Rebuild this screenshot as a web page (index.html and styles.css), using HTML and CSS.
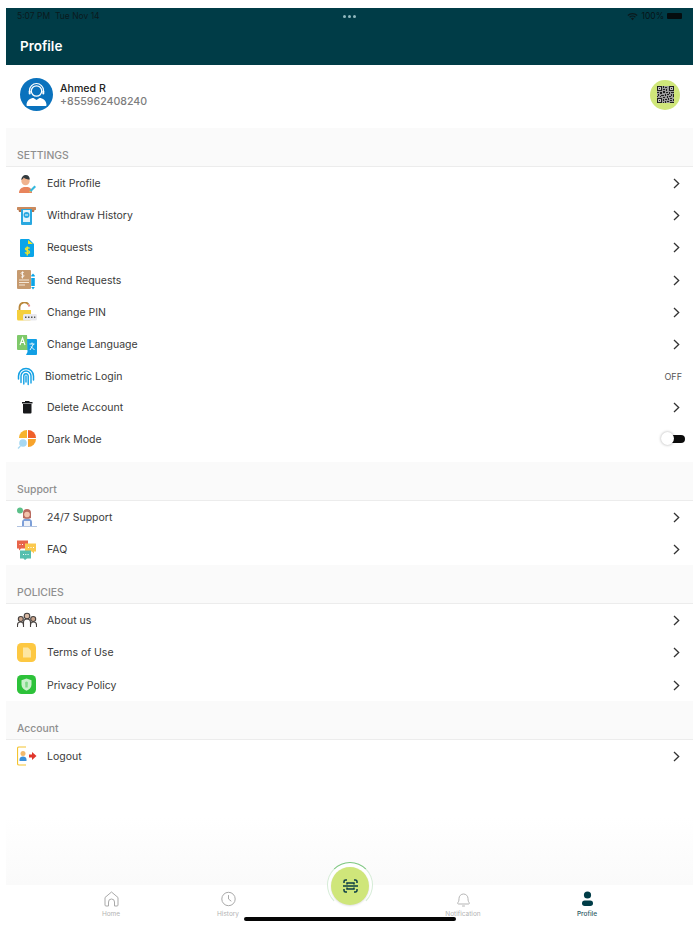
FILE: index.html
```html
<!DOCTYPE html>
<html lang="en">
<head>
    <meta charset="UTF-8">
    <meta name="viewport" content="width=device-width, initial-scale=1.0">
    <title>Profile</title>
    <link rel="stylesheet" href="styles.css">
</head>
<body>

<div class="app">
    <!-- Header with the tablet status bar inside -->
    <div class="header">
        <div class="status-bar">
            <span class="status-time">5:07 PM&nbsp;&nbsp;Tue Nov 14</span>
            <span class="status-dots"><i></i><i></i><i></i></span>
            <span class="status-right">
                <svg width="11" height="9" viewBox="0 0 13 10"><path d="M0.500 3.200a8.500 8.500 0 0 1 12 0l-1 1.100a7 7 0 0 0-10 0zM2.600 5.300a5.500 5.500 0 0 1 7.800 0l-1 1.100a4 4 0 0 0-5.800 0zM4.700 7.400a2.500 2.500 0 0 1 3.600 0L6.500 9.400z" fill="#0b1a1d"/></svg>
                100%
                <span class="battery"></span>
            </span>
        </div>
        <div class="header-title">Profile</div>
    </div>

    <div class="profile-row">
        <svg class="avatar" width="33" height="33" viewBox="0 0 33 33">
            <circle cx="16.500" cy="16.500" r="16.500" fill="#0a72bd"/>
            <circle cx="16.500" cy="13" r="5.200" fill="none" stroke="#fff" stroke-width="1.300"/>
            <path d="M9.500 14v-1.500a7 7 0 0 1 14 0V14" fill="none" stroke="#fff" stroke-width="1.200"/>
            <rect x="8.700" y="12.500" width="2" height="4" rx="1" fill="#fff"/>
            <rect x="22.300" y="12.500" width="2" height="4" rx="1" fill="#fff"/>
            <path d="M6.500 27c0-4.500 4-7 7-7l3 2 3-2c3 0 7 2.500 7 7 0 .6-.5 1-1 1h-18c-.5 0-1-.4-1-1z" fill="#fff"/>
        </svg>
        <div class="profile-text">
            <div class="profile-name">Ahmed R</div>
            <div class="profile-phone">+855962408240</div>
        </div>
        <div class="qr-btn">
            <svg width="17" height="17" viewBox="0 0 34 34" shape-rendering="crispEdges">
                <rect width="34" height="34" fill="#9a9a9a"/>
                <path d="M0 0h10v10H0zM24 0h10v10H24zM0 24h10v10H0zM12 0h2v4h-2zM16 2h4v2h-4zM12 6h4v2h-4zM18 6h2v4h-2zM0 12h4v2H0zM6 12h4v4H6zM12 10h4v4h-4zM18 12h4v2h-4zM24 12h2v4h-2zM28 12h6v2h-6zM2 16h2v4H2zM8 18h6v2H8zM16 16h2v4h-2zM20 16h4v2h-4zM28 16h2v4h-2zM32 16h2v6h-2zM0 20h2v2H0zM6 20h2v2H6zM12 22h4v2h-4zM20 20h2v4h-2zM24 20h4v2h-4zM12 26h2v4h-2zM16 26h4v2h-4zM22 24h2v4h-2zM26 24h4v2h-4zM32 26h2v4h-2zM16 30h2v4h-2zM20 30h4v2h-4zM26 28h4v2h-4zM26 32h8v2h-8zM12 32h2v2h-2z" fill="#1f1f1f"/>
                <path d="M2 2h6v6H2zM26 2h6v6h-6zM2 26h6v6H2z" fill="#bdbdbd"/>
                <path d="M4 4h2v2H4zM28 4h2v2h-2zM4 28h2v2H4z" fill="#1f1f1f"/>
            </svg>
        </div>
    </div>

    <div class="section-head">SETTINGS</div>
    <div class="list list-settings">
        <div class="row">
            <svg class="row-icon" viewBox="0 0 20 20"><path d="M2 19c0-4 3-6 6-6h2c3 0 5 2 5 6z" fill="#e8845c"/><circle cx="8.500" cy="7" r="4.200" fill="#f0b38e"/><path d="M4.300 6c0-3 2-5 4.500-5s4 2 4 4.500c-2 0-5-.5-6-2-.5 1-1.500 2-2.500 2.500z" fill="#333b3f"/><path d="M14 18l5-5-1.500-1.500-5 5z" fill="#35b8dd"/><path d="M12 18.500l1-2 1 1z" fill="#e5d34a"/></svg>
            <span class="row-label">Edit Profile</span>
            <svg class="chev" width="7" height="11" viewBox="0 0 7 11"><path d="M1 1l4.700 4.500L1 10" fill="none" stroke="#333" stroke-width="1.300"/></svg>
        </div>
        <div class="row">
            <svg class="row-icon" viewBox="0 0 20 20"><rect x="0" y="1" width="19" height="3" rx=".5" fill="#c98a5e"/><path d="M1.500 4H4v-1h11v1h2.500l-.5 2H2z" fill="#b5744c"/><rect x="4" y="3" width="11" height="16" rx="1" fill="#29a8e0"/><rect x="6" y="4" width="7" height="12" fill="#e4f4fb"/><circle cx="9.500" cy="9" r="3" fill="#29a8e0"/><rect x="8" y="8.500" width="3" height="1" fill="#fff"/></svg>
            <span class="row-label">Withdraw History</span>
            <svg class="chev" width="7" height="11" viewBox="0 0 7 11"><path d="M1 1l4.700 4.500L1 10" fill="none" stroke="#333" stroke-width="1.300"/></svg>
        </div>
        <div class="row">
            <svg class="row-icon" viewBox="0 0 20 20"><path d="M4 1h8l5 5v11.500a1.500 1.500 0 0 1-1.500 1.500h-11.500a1 1 0 0 1-1-1V2a1 1 0 0 1 1-1z" fill="#0aa5e8"/><path d="M11 2l5 4h-5z" fill="#f2e427"/><path d="M12.500 10.500c-.5-1-3.500-1.500-4 .3-.4 1.700 4.200 1.400 4 3.300-.2 1.800-3.600 1.500-4.400.3M10.300 8.500v9" fill="none" stroke="#f2e427" stroke-width="1.400"/></svg>
            <span class="row-label">Requests</span>
            <svg class="chev" width="7" height="11" viewBox="0 0 7 11"><path d="M1 1l4.700 4.500L1 10" fill="none" stroke="#333" stroke-width="1.300"/></svg>
        </div>
        <div class="row">
            <svg class="row-icon" viewBox="0 0 20 20"><rect x="0" y="0" width="14" height="19" rx="1" fill="#c69a6f"/><path d="M2 10h10M2 12.500h10M2 15h6" stroke="#f4e6d6" stroke-width="1"/><path d="M7 2.500c-1-.5-3-.3-3 1s3 1 3 2.300-2 1.500-3 1M5.500 1.500v7" fill="none" stroke="#fff" stroke-width=".8"/><path d="M16 3.500l1.800 2v1h-3.600v-1z" fill="#0aa5e8"/><rect x="14.200" y="8" width="3.600" height="8" fill="#0aa5e8"/><path d="M14.200 17h3.600L16 19.500z" fill="#0aa5e8"/></svg>
            <span class="row-label">Send Requests</span>
            <svg class="chev" width="7" height="11" viewBox="0 0 7 11"><path d="M1 1l4.700 4.500L1 10" fill="none" stroke="#333" stroke-width="1.300"/></svg>
        </div>
        <div class="row">
            <svg class="row-icon" viewBox="0 0 20 20"><path d="M2.500 8V5a5 5 0 0 1 9-2.500" fill="none" stroke="#b8863a" stroke-width="1.800"/><path d="M11.500 2.500l1 2" stroke="#e88a8a" stroke-width="1.800"/><path d="M0 8h14v9a1.500 1.500 0 0 1-1.500 1.500h-11A1.500 1.500 0 0 1 0 17z" fill="#f5cf3c"/><rect x="6" y="12" width="14" height="6.500" rx="1.500" fill="#e9e9ee"/><path d="M8 15.200h1.500M11 15.200h1.500M14 15.200h1.500M17 15.200h1.300" stroke="#555" stroke-width="1.500"/></svg>
            <span class="row-label">Change PIN</span>
            <svg class="chev" width="7" height="11" viewBox="0 0 7 11"><path d="M1 1l4.700 4.500L1 10" fill="none" stroke="#333" stroke-width="1.300"/></svg>
        </div>
        <div class="row">
            <svg class="row-icon" viewBox="0 0 20 20"><path d="M1 0h9l1 15H1a1 1 0 0 1-1-1V1a1 1 0 0 1 1-1z" fill="#7fc96a"/><path d="M3 10l2.500-7L8 10M4 7.500h3" fill="none" stroke="#fff" stroke-width="1.100"/><path d="M10 4h9a1 1 0 0 1 1 1v14a1 1 0 0 1-1 1H9l1.500-3z" fill="#129fe4"/><path d="M12.500 9h5M15 7.500V9M13 15l3.500-6M14 11.500l3.500 3.500" stroke="#fff" stroke-width=".9" fill="none"/></svg>
            <span class="row-label">Change Language</span>
            <svg class="chev" width="7" height="11" viewBox="0 0 7 11"><path d="M1 1l4.700 4.500L1 10" fill="none" stroke="#333" stroke-width="1.300"/></svg>
        </div>
        <div class="row row-short">
            <svg class="row-icon" viewBox="0 0 20 20" fill="none" stroke="#12a0e4" stroke-linecap="round"><path d="M1.500 13V10a7.500 7.500 0 0 1 15 0v4" stroke-width="1.500"/><path d="M4 16.500V10a5 5 0 0 1 10 0v7" stroke-width="1.400"/><path d="M6.800 18V10a2.200 2.200 0 0 1 4.400 0v8.500" stroke-width="1.400"/><path d="M9 10v6" stroke-width="1.400"/></svg>
            <span class="row-label">Biometric Login</span>
            <span class="row-off">OFF</span>
        </div>
        <div class="row row-del">
            <svg class="row-icon" viewBox="0 0 20 20"><path d="M6 7h8.500v8.500a1 1 0 0 1-1 1H7a1 1 0 0 1-1-1z" fill="#17181a"/><rect x="5" y="5" width="10.500" height="1.500" fill="#17181a"/><rect x="8" y="4" width="4.500" height="1.500" fill="#17181a"/></svg>
            <span class="row-label">Delete Account</span>
            <svg class="chev" width="7" height="11" viewBox="0 0 7 11"><path d="M1 1l4.700 4.500L1 10" fill="none" stroke="#333" stroke-width="1.300"/></svg>
        </div>
        <div class="row">
            <svg class="row-icon" viewBox="0 0 20 20"><path d="M10 1v8H2a8 8 0 0 1 8-8z" fill="#f7b32b"/><path d="M11 1a8 8 0 0 1 8 8h-8z" fill="#f0602a"/><path d="M11 10h8a8 8 0 0 1-8 8z" fill="#f7a32b"/><circle cx="6" cy="14" r="3.800" fill="#a7d8f2"/><path d="M3.500 17L1 19.500" stroke="#a7d8f2" stroke-width="1.200"/></svg>
            <span class="row-label">Dark Mode</span>
            <span class="toggle"><span class="toggle-knob"></span></span>
        </div>
    </div>

    <div class="section-head">Support</div>
    <div class="list">
        <div class="row">
            <svg class="row-icon" viewBox="0 0 20 20"><circle cx="3" cy="3.500" r="3" fill="#5cc08a"/><path d="M5 19v-4c0-2 2-3.500 5-3.500s5 1.500 5 3.500v4z" fill="#7d9fd8"/><path d="M7 19v-5h6v5z" fill="#eef1f7"/><path d="M6 11V6a4 4 0 0 1 8 0v5c-1 1-7 1-8 0z" fill="#b86a5e"/><circle cx="10" cy="7.500" r="2.800" fill="#f4c3ac"/><path d="M0 19.500h20" stroke="#9db4d8" stroke-width=".8"/></svg>
            <span class="row-label">24/7 Support</span>
            <svg class="chev" width="7" height="11" viewBox="0 0 7 11"><path d="M1 1l4.700 4.500L1 10" fill="none" stroke="#333" stroke-width="1.300"/></svg>
        </div>
        <div class="row">
            <svg class="row-icon" viewBox="0 0 20 20"><path d="M0 .5h11v8H4l-2 2v-2H0z" fill="#e8644a"/><path d="M8 3.500h11v8h-2v2l-2-2H8z" fill="#fbc94e"/><path d="M3 10.500h11v8h-4l-2 1.500-1.500-1.500H3z" fill="#55bfae"/><path d="M2.500 4.500h1M5 4.500h1M11 7.500h1M13.500 7.500h1M16 7.500h1M6 14.500h1M8.300 14.500h1M10.600 14.500h1" stroke="#fff" stroke-width="1.100"/></svg>
            <span class="row-label">FAQ</span>
            <svg class="chev" width="7" height="11" viewBox="0 0 7 11"><path d="M1 1l4.700 4.500L1 10" fill="none" stroke="#333" stroke-width="1.300"/></svg>
        </div>
    </div>

    <div class="section-head">POLICIES</div>
    <div class="list">
        <div class="row">
            <svg class="row-icon" viewBox="0 0 20 20" fill="none" stroke="#45403e" stroke-width="1.100"><circle cx="10" cy="5" r="2.800" fill="#d8b9a4"/><circle cx="3.800" cy="8" r="2.500" fill="#c9a48c"/><circle cx="16.200" cy="8" r="2.500" fill="#c9a48c"/><path d="M.5 16v-2a3 3 0 0 1 6 0v2M13.500 16v-2a3 3 0 0 1 6 0v2M6.500 16v-4.500a3.500 3.500 0 0 1 7 0V16"/></svg>
            <span class="row-label">About us</span>
            <svg class="chev" width="7" height="11" viewBox="0 0 7 11"><path d="M1 1l4.700 4.500L1 10" fill="none" stroke="#333" stroke-width="1.300"/></svg>
        </div>
        <div class="row">
            <svg class="row-icon" viewBox="0 0 20 20"><rect width="19" height="19" rx="4.500" fill="#fdc842"/><path d="M6 4.500h5l3 3v7H6z" fill="#fde6a2"/></svg>
            <span class="row-label">Terms of Use</span>
            <svg class="chev" width="7" height="11" viewBox="0 0 7 11"><path d="M1 1l4.700 4.500L1 10" fill="none" stroke="#333" stroke-width="1.300"/></svg>
        </div>
        <div class="row">
            <svg class="row-icon" viewBox="0 0 20 20"><rect width="19" height="19" rx="4.500" fill="#2dc23a"/><path d="M9.500 3.500l5 1.800v4.500c0 3-2.500 5-5 6-2.500-1-5-3-5-6V5.300z" fill="#c9efcb"/><circle cx="9.500" cy="8" r="1.500" fill="#7fd987"/><rect x="8.300" y="9" width="2.400" height="3.500" fill="#7fd987"/></svg>
            <span class="row-label">Privacy Policy</span>
            <svg class="chev" width="7" height="11" viewBox="0 0 7 11"><path d="M1 1l4.700 4.500L1 10" fill="none" stroke="#333" stroke-width="1.300"/></svg>
        </div>
    </div>

    <div class="section-head">Account</div>
    <div class="list">
        <div class="row">
            <svg class="row-icon" viewBox="0 0 20 20"><path d="M9 1H2a1.500 1.500 0 0 0-1.500 1.500v15A1.500 1.500 0 0 0 2 19h7" fill="none" stroke="#f4c430" stroke-width="1.200"/><circle cx="6" cy="7.500" r="2.500" fill="#f3b96b"/><path d="M2.500 15v-1.500c0-2 1.500-3 3.500-3s3.500 1 3.500 3V15z" fill="#3a8fd9"/><path d="M12 8.500h3V6l4.500 4-4.500 4v-2.500h-3z" fill="#e0352b"/></svg>
            <span class="row-label">Logout</span>
            <svg class="chev" width="7" height="11" viewBox="0 0 7 11"><path d="M1 1l4.700 4.500L1 10" fill="none" stroke="#333" stroke-width="1.300"/></svg>
        </div>
    </div>

    <div class="filler"></div>

    <div class="tabbar">
        <div class="tab">
            <svg width="15" height="16" viewBox="0 0 15 16" fill="none" stroke="#a9a9a9" stroke-width="1"><path d="M1 6.500L7.500 1 14 6.500V14a1 1 0 0 1-1 1h-2.500v-4a3 3 0 0 0-6 0v4H2a1 1 0 0 1-1-1z" stroke-linejoin="round"/></svg>
            <span>Home</span>
        </div>
        <div class="tab">
            <svg width="15" height="16" viewBox="0 0 15 16" fill="none" stroke="#a9a9a9" stroke-width="1"><circle cx="7.500" cy="8" r="6.700"/><path d="M7.500 4.500V8l2.500 2" stroke-linecap="round"/></svg>
            <span>History</span>
        </div>
        <div></div>
        <div class="tab">
            <svg width="15" height="16" viewBox="0 0 15 16" fill="none" stroke="#b5b5b5" stroke-width="1"><path d="M1.500 12c1-1 1.500-2 1.500-4.500a4.500 4.500 0 0 1 9 0c0 2.500.5 3.500 1.500 4.500 0 .5-.5 1-1 1H2.500c-.5 0-1-.5-1-1z"/><path d="M6.500 15h2" stroke-linecap="round"/></svg>
            <span>Notification</span>
        </div>
        <div class="tab tab-active">
            <svg width="15" height="16" viewBox="0 0 15 16" fill="#003c47"><circle cx="7.500" cy="4" r="3.600"/><rect x="2" y="9.500" width="11" height="5.500" rx="2.750"/></svg>
            <span>Profile</span>
        </div>
    </div>

    <!-- Scan button sits over the tab bar -->
    <div class="scan-ring"></div>
    <div class="scan-btn">
        <svg width="15" height="14" viewBox="0 0 15 14" fill="none" stroke="#0b3d45" stroke-width="1.500"><path d="M1 4V2.500A1.500 1.500 0 0 1 2.500 1H4M11 1h1.500A1.500 1.500 0 0 1 14 2.500V4M1 10v1.500A1.500 1.500 0 0 0 2.500 13H4M11 13h1.500a1.500 1.500 0 0 0 1.500-1.500V10"/><path d="M0 7h15"/><path d="M4 5.500V4h7v1.500M4 8.500V10h7V8.500"/></svg>
    </div>
    <div class="home-indicator"></div>
</div>

</body>
</html>
```

FILE: styles.css
```css
* {
    box-sizing: border-box;
}
html, body {
    margin: 0;
    background: #fff;
}
body {
    padding: 8px 7px 0 6px;
    font-family: "Inter", "Roboto", sans-serif;
    color: #333;
}
.app {
    height: 926px;
    display: flex;
    flex-direction: column;
    overflow: hidden;
}
/* Header */
.header {
    background-color: #003c47;
    height: 57px;
    padding: 0 11px;
    flex-shrink: 0;
}
.status-bar {
    height: 16px;
    display: flex;
    align-items: center;
    justify-content: space-between;
    font-size: 8.500px;
    color: #0b1a1d;
    position: relative;
}
.status-dots {
    display: flex;
    gap: 2px;
    position: absolute;
    left: 326px;
}
.status-dots i {
    width: 3px;
    height: 3px;
    border-radius: 50%;
    background: #8fb7bd;
}
.status-right {
    display: flex;
    align-items: center;
    gap: 3px;
    color: #071417;
}
.battery {
    width: 15px;
    height: 6px;
    background: #050d0f;
    border-radius: 1px;
}
.header-title {
    color: #fff;
    font-size: 13.500px;
    font-weight: 600;
    padding: 14px 3px 0;
}
/* Profile row */
.profile-row {
    height: 63px;
    display: flex;
    align-items: center;
    padding: 0 13px 4px 14px;
    background: #fff;
    flex-shrink: 0;
}
.avatar {
    flex-shrink: 0;
}
.profile-text {
    margin-left: 7px;
    flex: 1;
}
.profile-name {
    font-size: 10.600px;
    font-weight: 500;
    color: #222;
    line-height: 13px;
    padding-top: 1px;
}
.profile-phone {
    font-size: 10.600px;
    font-weight: 500;
    color: #7d7d7d;
    line-height: 13px;
}
.qr-btn {
    width: 30px;
    height: 30px;
    border-radius: 50%;
    background: #cfe67a;
    display: flex;
    align-items: center;
    justify-content: center;
}
/* Section headings */
.section-head {
    background: #fafafa;
    height: 39px;
    padding: 21px 11px 0;
    font-size: 10.400px;
    font-weight: 500;
    line-height: 14px;
    color: #8f8f8f;
    border-bottom: 1px solid #ececec;
    flex-shrink: 0;
}
/* Rows */
.list {
    background: #fff;
    flex-shrink: 0;
}
.list-settings {
    padding-bottom: 7px;
}
.row {
    height: 32.200px;
    display: flex;
    align-items: center;
    padding: 1px 12px 0 11px;
}
.row-short {
    height: 31px;
}
.row-del {
    height: 31.500px;
}
.row-icon {
    width: 20px;
    height: 20px;
    flex-shrink: 0;
}
.row-label {
    margin-left: 10px;
    flex: 1;
    font-size: 10.500px;
    color: #3a3a3a;
}
.row-short .row-label {
    margin-left: 8px;
}
.chev {
    margin-right: 1px;
}
.row-off {
    font-size: 9px;
    color: #555;
    margin-right: -1px;
}
/* Dark mode switch */
.toggle {
    width: 23px;
    height: 8px;
    background: #0c0c0c;
    border-radius: 4px;
    position: relative;
    margin-right: -4px;
}
.toggle-knob {
    position: absolute;
    left: -1px;
    top: -3px;
    width: 13px;
    height: 13px;
    border-radius: 50%;
    background: #fff;
    box-shadow: 0 0 3px rgba(0, 0, 0, 0.35);
}
/* Bottom */
.filler {
    flex: 1;
    background: linear-gradient(to bottom, #fff 40%, #fafafa 100%);
}
.tabbar {
    height: 49px;
    background: #fff;
    border-radius: 10px 10px 0 0;
    display: grid;
    grid-template-columns: 117px 117px 118px 117px 131px;
    padding-left: 46.500px;
    flex-shrink: 0;
}
.tab {
    display: flex;
    flex-direction: column;
    align-items: center;
    padding-top: 6px;
    font-size: 6.500px;
    color: #b3b3b3;
    gap: 3px;
}
.tab-active {
    color: #2e5a63;
    font-weight: 500;
}
.scan-ring {
    position: absolute;
    left: 327px;
    top: 862px;
    width: 46px;
    height: 46px;
    border-radius: 50%;
    border: 1px solid;
    border-color: #7cc67f #d5ecd6 transparent #d5ecd6;
    background: #fff;
}
.scan-btn {
    position: absolute;
    left: 331px;
    top: 867px;
    width: 38px;
    height: 38px;
    border-radius: 50%;
    background: #cfe67a;
    display: flex;
    align-items: center;
    justify-content: center;
    box-shadow: 0 1px 2px rgba(0, 0, 0, 0.12);
}
.home-indicator {
    position: absolute;
    left: 244px;
    top: 917px;
    width: 212px;
    height: 4px;
    border-radius: 2px;
    background: #050505;
}
```
